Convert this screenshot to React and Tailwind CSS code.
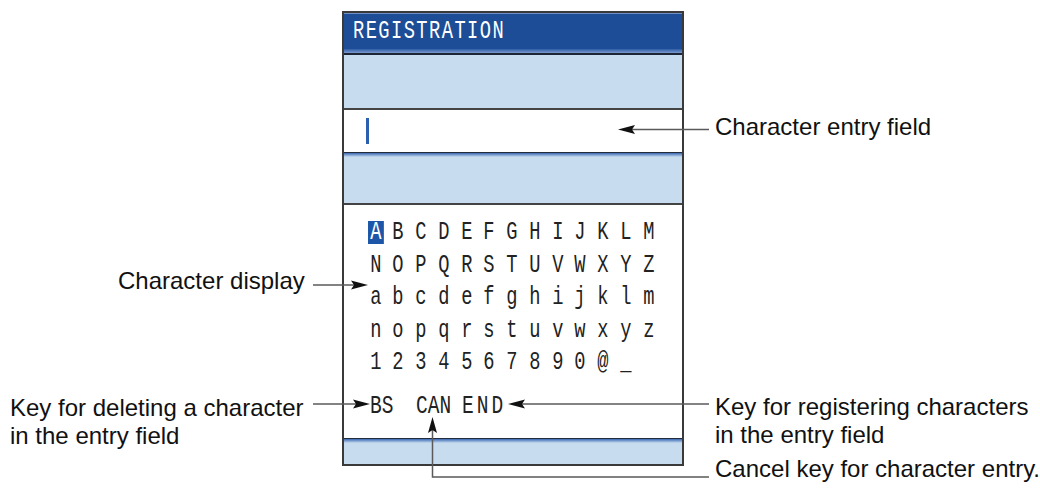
import React from 'react'

const rows = [
  'ABCDEFGHIJKLM'.split(''),
  'NOPQRSTUVWXYZ'.split(''),
  'abcdefghijklm'.split(''),
  'nopqrstuvwxyz'.split(''),
  ['1', '2', '3', '4', '5', '6', '7', '8', '9', '0', '@', '_'],
]

const mono = "font-['Liberation_Mono',monospace]"

function Glyph({ ch, active }) {
  return (
    <span
      className={`block h-[23px] leading-[23px] text-[26px] scale-x-[0.72] px-[3px] ${
        active ? 'bg-[#1d56a8] text-white' : 'text-[#222]'
      }`}
    >
      {ch}
    </span>
  )
}

function Panel() {
  return (
    <div className={`w-[342px] border-2 border-[#3a3a3a] bg-white ${mono}`}>
      {/* title bar */}
      <div className="border-t border-[#6f8fc6] bg-[#1c4d96]">
        <div className="flex h-[35px] items-center pl-[9px]">
          <span className="block origin-left scale-x-[0.72] text-[26px] leading-[23px] tracking-[2px] text-white">
            REGISTRATION
          </span>
        </div>
        <div className="h-[4px] bg-gradient-to-b from-[#2d5ca4] to-[#7b9bd0]" />
        <div className="h-[2px] bg-[#1b2535]" />
      </div>
      <div className="h-[53px] bg-[#c8dcf0]" />
      <div className="h-[1.5px] bg-[#444]" />

      {/* entry field */}
      <div className="flex h-[42px] items-center bg-white pl-[22px]">
        <div className="h-[26px] w-[3px] bg-[#2c5fae]" />
      </div>
      <div className="h-[1.5px] bg-[#222c3c]" />
      <div className="h-[4px] bg-gradient-to-b from-[#3a68b0] to-[#c8dcf0]" />
      <div className="h-[46px] bg-[#c8dcf0]" />
      <div className="h-[1.5px] bg-[#444]" />

      {/* character display */}
      <div className="h-[233px] bg-white pl-[20px] pt-[12px]">
        {rows.map((row, r) => (
          <div key={r} className="flex h-[32.5px]">
            {row.map((ch, i) => (
              <div key={i} className="flex h-[32.5px] w-[22.75px] items-center justify-center">
                <Glyph ch={ch} active={r === 0 && i === 0} />
              </div>
            ))}
          </div>
        ))}
        <div className="mt-[11px] flex h-[32.5px] items-center pl-[6px] text-[#222]">
          <span className="block w-[46px] origin-left scale-x-[0.75] text-[26px] leading-[23px]">BS</span>
          <span className="block w-[46px] origin-left scale-x-[0.75] text-[26px] leading-[23px]">CAN</span>
          <span className="block origin-left scale-x-[0.75] text-[26px] leading-[23px] tracking-[4px]">END</span>
        </div>
      </div>
      <div className="h-[1.5px] bg-[#222c3c]" />
      <div className="h-[4px] bg-gradient-to-b from-[#3a68b0] to-[#c8dcf0]" />
      <div className="h-[21px] bg-[#c8dcf0]" />
    </div>
  )
}

function Arrows() {
  return (
    <svg className="pointer-events-none absolute inset-0" width="1040" height="488">
      <g stroke="#5a5a5a" strokeWidth="1.5" fill="none">
        <line x1="632" y1="129.5" x2="709" y2="129.5" />
        <line x1="313" y1="285" x2="355" y2="285" />
        <line x1="313" y1="404" x2="357" y2="404" />
        <line x1="521" y1="404" x2="709" y2="404" />
        <polyline points="432.5,430 432.5,477 709,477" />
      </g>
      <g fill="#111">
        <polygon points="618,129.5 635,125 632,129.5 635,134" />
        <polygon points="368,285 351,280.5 354,285 351,289.5" />
        <polygon points="370,404 353,399.5 356,404 353,408.5" />
        <polygon points="508,404 525,399.5 522,404 525,408.5" />
        <polygon points="432.5,417 428,433 432.5,430 437,433" />
      </g>
    </svg>
  )
}

export default function App() {
  return (
    <div className="relative h-[488px] w-[1040px] overflow-hidden bg-white font-['Liberation_Sans',Arial,sans-serif] text-[24px] leading-[28px] text-[#111]">
      <div className="pl-[342px] pt-[11px]">
        <Panel />
      </div>
      <Arrows />
      <div className="absolute left-[118px] top-[267px] whitespace-nowrap">Character display</div>
      <div className="absolute left-[10px] top-[394px] whitespace-nowrap">
        Key for deleting a character
        <br />
        in the entry field
      </div>
      <div className="absolute left-[715px] top-[113px] whitespace-nowrap">Character entry field</div>
      <div className="absolute left-[715px] top-[393px] whitespace-nowrap">
        Key for registering characters
        <br />
        in the entry field
      </div>
      <div className="absolute left-[715px] top-[455px] whitespace-nowrap">Cancel key for character entry.</div>
    </div>
  )
}
